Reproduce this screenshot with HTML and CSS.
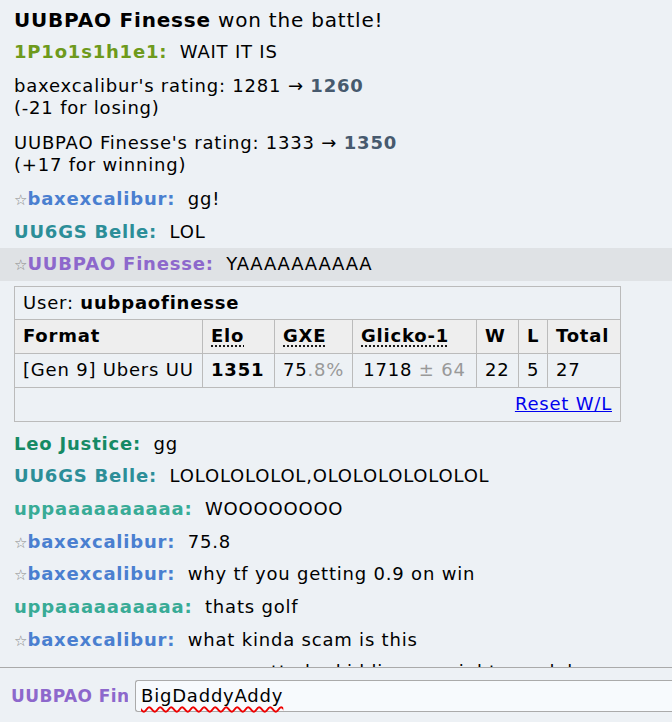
FILE: index.html
```html
<!DOCTYPE html>
<html lang="en">
<head>
    <meta charset="UTF-8">
    <title>Battle chat</title>
    <link rel="stylesheet" href="styles.css">
</head>
<body>
    <div class="log">
        <h2 class="win"><strong>UUBPAO Finesse</strong> won the battle!</h2>
        <div class="chat"><strong class="c-olive">1P1o1s1h1e1:</strong> <em>WAIT IT IS</em></div>
        <div class="chat rating">baxexcalibur's rating: 1281 &rarr; <strong>1260</strong><br>(-21 for losing)</div>
        <div class="chat rating">UUBPAO Finesse's rating: 1333 &rarr; <strong>1350</strong><br>(+17 for winning)</div>
        <div class="chat"><small>&#9734;</small><strong class="c-blue">baxexcalibur:</strong> <em>gg!</em></div>
        <div class="chat"><strong class="c-teal">UU6GS Belle:</strong> <em>LOL</em></div>
        <div class="chat mine"><small>&#9734;</small><strong class="c-purple">UUBPAO Finesse:</strong> <em>YAAAAAAAAAA</em></div>
        <div class="chat">
            <table class="ladder">
                <colgroup>
                    <col class="w-format">
                    <col class="w-elo">
                    <col class="w-gxe">
                    <col class="w-glicko">
                    <col class="w-w">
                    <col class="w-l">
                    <col class="w-total">
                </colgroup>
                <tr class="user"><td colspan="7">User: <strong>uubpaofinesse</strong></td></tr>
                <tr class="head">
                    <th>Format</th>
                    <th><abbr>Elo</abbr></th>
                    <th><abbr>GXE</abbr></th>
                    <th><abbr>Glicko-1</abbr></th>
                    <th>W</th>
                    <th>L</th>
                    <th>Total</th>
                </tr>
                <tr>
                    <td>[Gen 9] Ubers UU</td>
                    <td><strong>1351</strong></td>
                    <td>75<span class="dim">.8%</span></td>
                    <td class="center">1718<span class="dim"> &plusmn; 64</span></td>
                    <td>22</td>
                    <td>5</td>
                    <td>27</td>
                </tr>
                <tr><td colspan="7" class="right"><a href="#">Reset W/L</a></td></tr>
            </table>
        </div>
        <div class="chat"><strong class="c-green">Leo Justice:</strong> <em>gg</em></div>
        <div class="chat"><strong class="c-teal">UU6GS Belle:</strong> <em>LOLOLOLOLOL,OLOLOLOLOLOLOL</em></div>
        <div class="chat"><strong class="c-mint">uppaaaaaaaaaa:</strong> <em>WOOOOOOOO</em></div>
        <div class="chat"><small>&#9734;</small><strong class="c-blue">baxexcalibur:</strong> <em>75.8</em></div>
        <div class="chat"><small>&#9734;</small><strong class="c-blue">baxexcalibur:</strong> <em>why tf you getting 0.9 on win</em></div>
        <div class="chat"><strong class="c-mint">uppaaaaaaaaaa:</strong> <em>thats golf</em></div>
        <div class="chat"><small>&#9734;</small><strong class="c-blue">baxexcalibur:</strong> <em>what kinda scam is this</em></div>
        <div class="chat"><strong class="c-mint">uppaaaaaaaaaa:</strong> <em>you gotta be kidding me right now lol</em></div>
    </div>
    <div class="compose">
        <div class="compose-name">UUBPAO Finesse</div>
        <div class="textbox"><span class="typo">BigDaddyAddy</span></div>
    </div>
</body>
</html>
```

FILE: styles.css
```css
body {
    margin: 0;
    padding: 0;
    background-color: #edf1f5;
    font-family: "DejaVu Sans", Verdana, sans-serif;
    font-size: 18px;
    letter-spacing: 0.8px;
    color: #000;
}
.log {
    height: 668px;
    overflow: hidden;
    border-bottom: 1px solid #aaaaaa;
    box-sizing: border-box;
}
.win {
    margin: 0 0 4px;
    padding: 8px 14px 0;
    font-size: 20px;
    font-weight: normal;
    line-height: 24px;
}
.chat {
    padding: 5.33px 14px;
    line-height: 22px;
}
.chat.rating {
    padding: 6.5px 14px;
}
.chat em {
    font-style: normal;
    padding-left: 6px;
}
.chat small {
    font-size: 15px;
    line-height: 1;
    color: #888;
    letter-spacing: 0;
}
.chat.rating strong {
    color: #475a6e;
}
.chat.mine {
    background-color: #dfe2e5;
}
.c-olive { color: #6e9a1c; }
.c-blue { color: #4a7fd0; }
.c-teal { color: #2c8e98; }
.c-purple { color: #8d68cc; }
.c-green { color: #168a64; }
.c-mint { color: #38ab96; }
.ladder {
    border-collapse: collapse;
    border: 1px solid #bbbbbb;
    width: 606px;
    table-layout: fixed;
}
.ladder td, .ladder th {
    border: 1px solid #bbbbbb;
    padding: 5px 8px;
    height: 23px;
    text-align: left;
    white-space: nowrap;
}
.ladder .user td {
    height: 21px;
}
.ladder th {
    background-color: #eeeeee;
}
.w-format { width: 188px; }
.w-elo { width: 72px; }
.w-gxe { width: 78px; }
.w-glicko { width: 124px; }
.w-w { width: 42px; }
.w-l { width: 29px; }
.w-total { width: 73px; }
.ladder abbr {
    text-decoration: underline dotted;
    text-underline-offset: 3px;
}
.ladder .dim {
    color: #999;
}
.ladder .center {
    text-align: center;
}
.ladder .right {
    text-align: right;
}
.ladder a {
    color: #0000ee;
}
.compose {
    display: flex;
    align-items: center;
    padding: 12px 0 9px 11px;
    gap: 7px;
}
.compose-name {
    width: 117px;
    overflow: hidden;
    white-space: nowrap;
    font-weight: bold;
    color: #8d68cc;
    font-size: 17px;
    letter-spacing: 0.4px;
}
.textbox {
    flex: 1;
    height: 30px;
    border: 1px solid #aaaaaa;
    border-right: none;
    border-radius: 3px 0 0 3px;
    background-color: #f7fafd;
    padding: 0 5px;
    line-height: 30px;
    font-size: 18px;
}
.typo {
    text-decoration: underline wavy #e00;
    text-decoration-thickness: 1.5px;
    text-underline-offset: 4px;
}
```
